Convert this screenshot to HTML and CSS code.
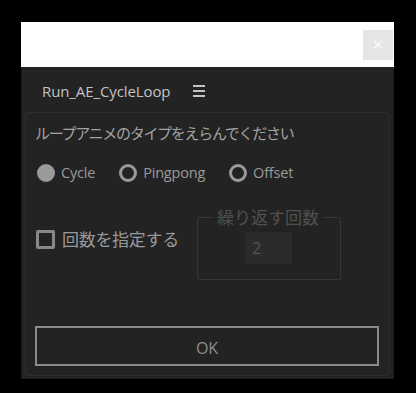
FILE: index.html
```html
<!DOCTYPE html>
<html lang="ja">
<head>
  <meta charset="UTF-8" />
  <title>Run_AE_CycleLoop</title>
  <link rel="stylesheet" href="styles.css">
</head>
<body>

  <div class="window">
    <div class="titlebar">
      <div class="close-btn">&times;</div>
    </div>

    <div class="panel">
      <div class="panel-header">
        <span class="panel-title">Run_AE_CycleLoop</span>
        <span class="menu-icon"><i></i><i></i><i></i></span>
      </div>

      <div class="group">
        <div class="group-title">ループアニメのタイプをえらんでください</div>

        <div class="radios">
          <label class="radio checked"><span class="dot"></span>Cycle</label>
          <label class="radio"><span class="dot"></span>Pingpong</label>
          <label class="radio"><span class="dot"></span>Offset</label>
        </div>

        <div class="count-row">
          <label class="check"><span class="box"></span>回数を指定する</label>
          <fieldset class="count-box">
            <legend>繰り返す回数</legend>
            <div class="count-input">2</div>
          </fieldset>
        </div>

        <div class="ok-btn">OK</div>
      </div>
    </div>
  </div>

</body>
</html>
```

FILE: styles.css
```css
* {
  box-sizing: border-box;
}

body {
  margin: 0;
  background: #000;
  font-family: 'Open Sans', 'Noto Sans CJK JP', sans-serif;
  width: 416px;
  height: 393px;
  overflow: hidden;
}

.window {
  margin: 22px 0 0 21px;
  width: 373px;
}

.titlebar {
  height: 45px;
  background: #fff;
  display: flex;
  justify-content: flex-end;
  align-items: center;
  padding-right: 1px;
}

.close-btn {
  width: 30px;
  height: 30px;
  background: #e5e5e5;
  color: #fafafa;
  font-size: 19px;
  line-height: 29px;
  text-align: center;
}

.panel {
  height: 312px;
  background: #232323;
  border: 1px solid #1c1c1c;
  border-top: 0;
  padding: 0 4px 2px 3px;
  display: flex;
  flex-direction: column;
}

.panel-header {
  height: 45px;
  flex-shrink: 0;
  display: flex;
  align-items: center;
  padding: 2px 0 0 17px;
}

.panel-title {
  color: #c2c2c2;
  font-size: 15px;
  letter-spacing: -0.1px;
}

.menu-icon {
  margin-left: 23px;
  width: 12px;
  display: flex;
  flex-direction: column;
  gap: 3px;
  margin-top: 1px;
}

.menu-icon i {
  display: block;
  height: 2px;
  background: #c2c2c2;
}

.group {
  flex: 1;
  border: 1px solid #2e2e2e;
  border-radius: 3px;
  padding: 0 9px 9px 9px;
  display: flex;
  flex-direction: column;
}

.group-title {
  margin-top: 10px;
  font-family: 'Noto Sans CJK JP', sans-serif;
  font-size: 15px;
  line-height: 20px;
  letter-spacing: -1.3px;
  color: #a3a3a3;
}

.radios {
  margin-top: 20px;
  display: flex;
  gap: 24px;
  padding-left: 2px;
}

.radio {
  display: flex;
  align-items: center;
  gap: 6px;
  color: #9a9a9a;
  font-size: 14.5px;
  letter-spacing: -0.2px;
  line-height: 20px;
}

.radio .dot {
  width: 18px;
  height: 18px;
  border-radius: 50%;
  border: 3px solid #9a9a9a;
}

.radio.checked .dot {
  background: #9a9a9a;
}

.count-row {
  margin-top: 24px;
  display: flex;
  align-items: flex-start;
}

.check {
  width: 162px;
  margin-top: 22px;
  display: flex;
  align-items: center;
  gap: 7px;
  font-family: 'Noto Sans CJK JP', sans-serif;
  font-size: 17px;
  line-height: 20px;
  letter-spacing: -0.3px;
  color: #999;
}

.check .box {
  width: 19px;
  height: 19px;
  border: 3px solid #888;
  border-radius: 2px;
  margin-left: 1px;
}

.count-box {
  margin: 0;
  padding: 0 0 15px 47px;
  width: 144px;
  border: 1px solid #363636;
  border-radius: 2px;
}

.count-box legend {
  margin-left: -31px;
  padding: 0 3px;
  font-family: 'Noto Sans CJK JP', sans-serif;
  font-size: 17px;
  line-height: 20px;
  color: #505050;
}

.count-input {
  margin-top: 5px;
  width: 47px;
  height: 32px;
  background: #2b2b2b;
  color: #555;
  font-size: 16px;
  line-height: 32px;
  padding-left: 7px;
}

.ok-btn {
  margin-top: auto;
  height: 40px;
  border: 2px solid #8a8a8a;
  color: #8e8e8e;
  font-size: 16px;
  line-height: 36px;
  padding-top: 2px;
  text-align: center;
}
```
